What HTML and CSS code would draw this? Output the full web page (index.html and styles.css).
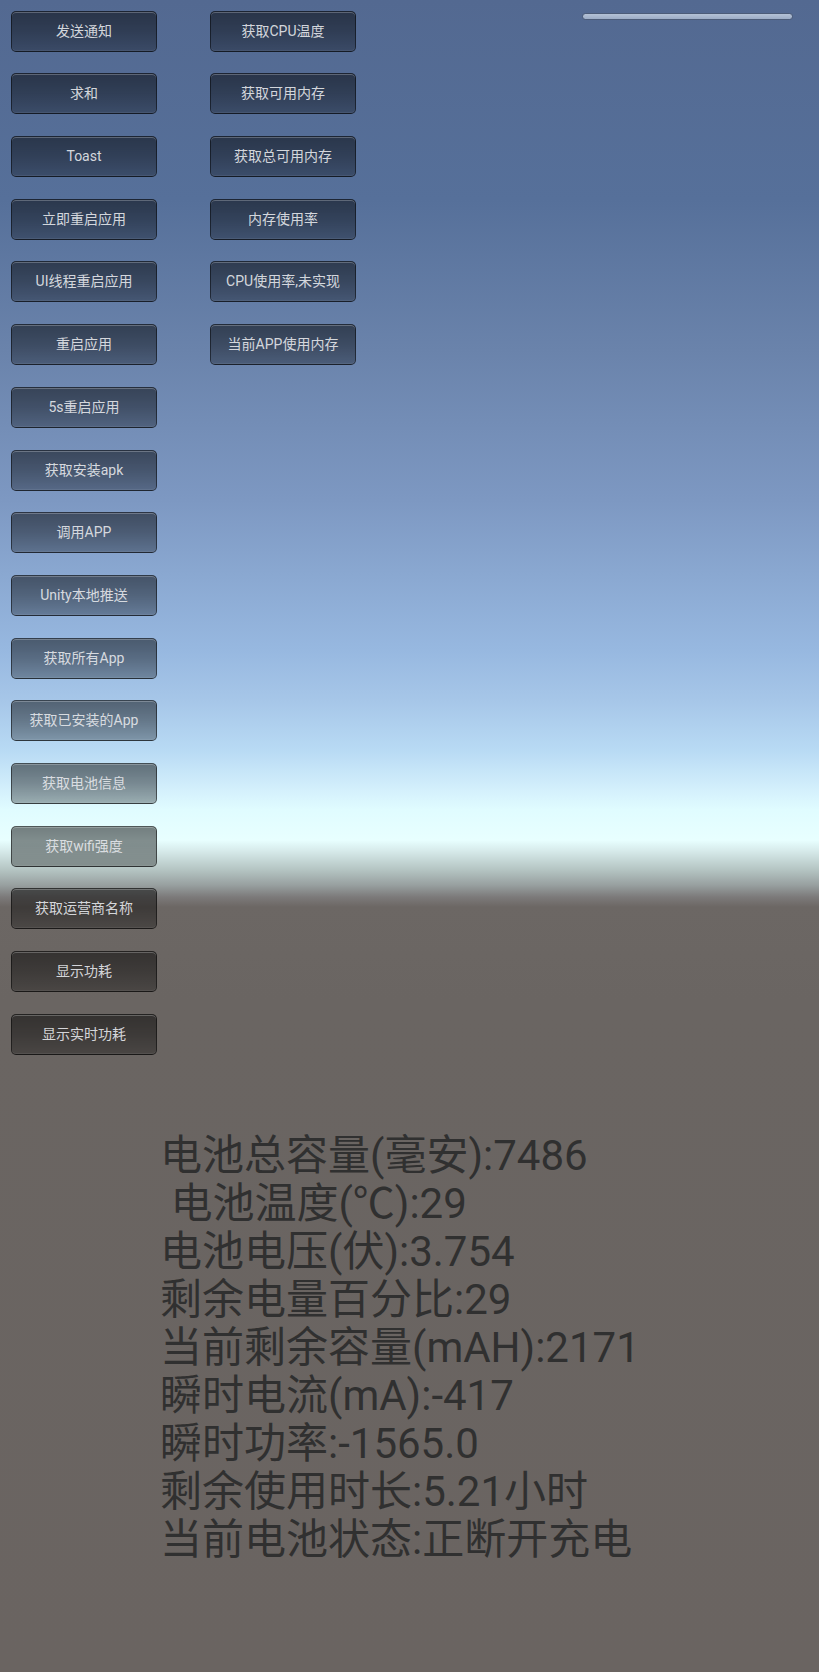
FILE: index.html
```html
<!DOCTYPE html>
<html lang="zh-CN">
<head>
<meta charset="utf-8">
<title>Android Plugin Demo</title>
<link rel="stylesheet" href="styles.css">
</head>
<body>
<div class="screen">
  <div class="slider"></div>
  <div class="buttons">
    <div class="col">
      <button class="btn">发送通知</button>
      <button class="btn">求和</button>
      <button class="btn">Toast</button>
      <button class="btn">立即重启应用</button>
      <button class="btn">UI线程重启应用</button>
      <button class="btn">重启应用</button>
      <button class="btn">5s重启应用</button>
      <button class="btn">获取安装apk</button>
      <button class="btn">调用APP</button>
      <button class="btn">Unity本地推送</button>
      <button class="btn">获取所有App</button>
      <button class="btn">获取已安装的App</button>
      <button class="btn">获取电池信息</button>
      <button class="btn">获取wifi强度</button>
      <button class="btn">获取运营商名称</button>
      <button class="btn">显示功耗</button>
      <button class="btn">显示实时功耗</button>
    </div>
    <div class="col">
      <button class="btn">获取CPU温度</button>
      <button class="btn">获取可用内存</button>
      <button class="btn">获取总可用内存</button>
      <button class="btn">内存使用率</button>
      <button class="btn">CPU使用率,未实现</button>
      <button class="btn">当前APP使用内存</button>
    </div>
  </div>
  <div class="info">
    <div class="line">电池总容量(毫安):7486</div>
    <div class="line">&nbsp;电池温度(℃):29</div>
    <div class="line">电池电压(伏):3.754</div>
    <div class="line">剩余电量百分比:29</div>
    <div class="line">当前剩余容量(mAH):2171</div>
    <div class="line">瞬时电流(mA):-417</div>
    <div class="line">瞬时功率:-1565.0</div>
    <div class="line">剩余使用时长:5.21小时</div>
    <div class="line">当前电池状态:正断开充电</div>
  </div>
</div>
</body>
</html>
```

FILE: styles.css
```css
html, body {
  margin: 0;
  padding: 0;
}

body {
  width: 819px;
  height: 1672px;
  overflow: hidden;
  font-family: Roboto, "Noto Sans CJK SC", sans-serif;
  background: linear-gradient(to bottom,
    #536991 0px,
    #56709a 200px,
    #6a83ab 350px,
    #7d98c2 500px,
    #97b8e0 650px,
    #a6c6e8 700px,
    #b8daf4 750px,
    #d4f0fc 790px,
    #e0fcff 810px,
    #e8ffff 840px,
    #d8ecec 850px,
    #b4c4c2 870px,
    #98a0a0 885px,
    #7c7a7a 897px,
    #6c6764 907px,
    #6a6562 1000px,
    #6a6461 1672px);
}

.screen {
  position: relative;
  width: 819px;
  height: 1672px;
  padding: 10.7px 0 0 11px;
  box-sizing: border-box;
}

.slider {
  position: absolute;
  top: 13px;
  left: 582px;
  width: 211px;
  height: 7px;
  box-sizing: border-box;
  border-radius: 4px;
  background: linear-gradient(to bottom, #b4c2d6, #9cacc6);
  border: 1px solid #4c5c78;
}

.buttons {
  display: flex;
  gap: 53px;
  align-items: flex-start;
}

.col {
  display: flex;
  flex-direction: column;
  gap: 21.7px;
}

.btn {
  width: 146px;
  height: 41px;
  margin: 0;
  padding: 0;
  box-sizing: border-box;
  border: 1px solid rgba(0, 0, 0, 0.5);
  border-radius: 5px;
  background: linear-gradient(to bottom, rgba(0, 0, 0, 0.5) 0%, rgba(0, 0, 0, 0.42) 50%, rgba(0, 0, 0, 0.3) 100%);
  box-shadow: inset 0 1px 0 rgba(255, 255, 255, 0.24), inset 0 -1px 0 rgba(255, 255, 255, 0.06);
  color: rgba(228, 230, 234, 0.92);
  font-family: Roboto, "Noto Sans CJK SC", sans-serif;
  font-size: 14px;
  line-height: 39px;
  text-align: center;
  white-space: nowrap;
}

.info {
  margin-top: 77px;
  padding-left: 149px;
  color: #303030;
  font-size: 42px;
  line-height: 48px;
}

.line {
  white-space: pre;
}
```
